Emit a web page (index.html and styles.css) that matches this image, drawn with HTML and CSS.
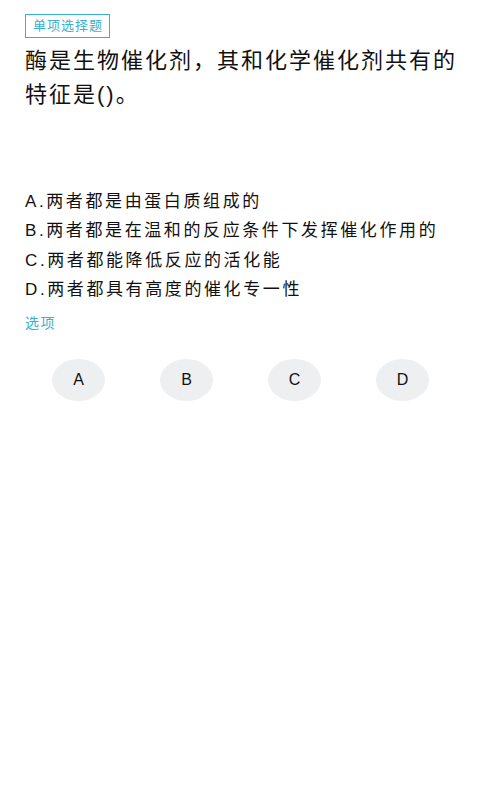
FILE: index.html
```html
<!DOCTYPE html>
<html lang="zh-CN">
<head>
  <meta charset="UTF-8" />
  <meta name="viewport" content="width=device-width, initial-scale=1.0"/>
  <title>单项选择题</title>
  <link rel="stylesheet" href="styles.css">
</head>
<body>
  <div class="page">
    <div class="tag">单项选择题</div>
    <p class="question">酶是生物催化剂，其和化学催化剂共有的特征是()。</p>
    <ul class="options">
      <li>A.两者都是由蛋白质组成的</li>
      <li>B.两者都是在温和的反应条件下发挥催化作用的</li>
      <li>C.两者都能降低反应的活化能</li>
      <li>D.两者都具有高度的催化专一性</li>
    </ul>
    <div class="label">选项</div>
    <div class="choices">
      <button class="choice">A</button>
      <button class="choice">B</button>
      <button class="choice">C</button>
      <button class="choice">D</button>
    </div>
  </div>
</body>
</html>
```

FILE: styles.css
```css
body {
  margin: 0;
  background: #fff;
  font-family: "Liberation Sans", "Noto Sans CJK SC", sans-serif;
  color: #111;
}
.page {
  padding: 14px 20px 0 25px;
}
.tag {
  width: fit-content;
  border: 1px solid #3ab0cc;
  color: #3ab0cc;
  font-size: 13px;
  letter-spacing: 1px;
  line-height: 22px;
  padding: 0 6px 0 7px;
}
.question {
  margin: 6px 0 0;
  font-size: 22px;
  letter-spacing: 2px;
  line-height: 34px;
}
.options {
  list-style: none;
  margin: 75px 0 0;
  padding: 0;
}
.options li {
  font-size: 17px;
  letter-spacing: 2.6px;
  line-height: 29.4px;
}
.label {
  margin-top: 3px;
  color: #3ab0cc;
  font-size: 14px;
  letter-spacing: 1.5px;
  line-height: 30px;
}
.choices {
  display: flex;
  gap: 55px;
  margin: 21px 0 0 27px;
}
.choice {
  width: 53px;
  height: 42px;
  border: none;
  border-radius: 50%;
  background: #eeeff1;
  color: #111;
  font-family: "Liberation Sans", sans-serif;
  font-size: 16px;
  padding: 0;
}
```
